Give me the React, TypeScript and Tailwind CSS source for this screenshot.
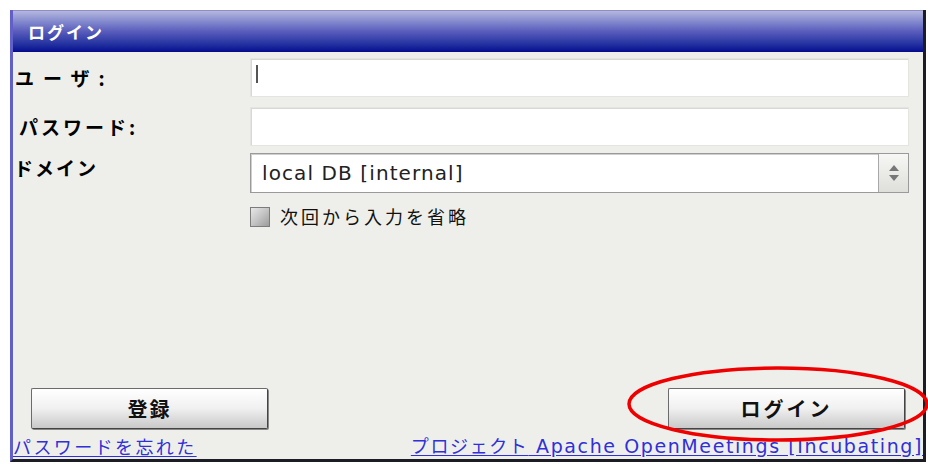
import React from "react";

const jp = { fontFamily: '"Noto Sans CJK JP", "DejaVu Sans", sans-serif' };
const ui = { fontFamily: '"DejaVu Sans", "Noto Sans CJK JP", sans-serif' };

function Label({ children, className = "" }: { children: React.ReactNode; className?: string }) {
  return (
    <div className={`w-[236px] shrink-0 text-[19px] font-bold text-black leading-none ${className}`} style={jp}>
      {children}
    </div>
  );
}

function TextField({ caret = false }: { caret?: boolean }) {
  return (
    <div className="relative h-[39px] flex-1 bg-white border border-[#e4e5e0] shadow-[inset_1px_1px_0_#d8d9d4]">
      {caret && <div className="absolute left-[5px] top-[6px] w-[2px] h-[18px] bg-[#555]" />}
    </div>
  );
}

function Button({ children, className = "" }: { children: React.ReactNode; className?: string }) {
  return (
    <div
      className={`w-[237px] h-[41px] flex items-center justify-center rounded-[2px] border border-[#6b6b6b] border-b-[#444] border-r-[#444] bg-gradient-to-b from-white via-[#f0f0f0] to-[#c9c9c9] shadow-[1px_1px_0_#888] text-[20px] font-bold text-[#111] ${className}`}
      style={jp}
    >
      {children}
    </div>
  );
}

export default function App() {
  return (
    <div className="w-[928px] h-[464px] bg-white pt-[10px] pl-[10px]">
      <div className="w-[916px] h-[452px] flex flex-col bg-[#eeefea] border-l-[3px] border-l-[#6060c8] border-r-[3px] border-r-[#1c1c24] border-b-[3px] border-b-[#1c1c24]">
        {/* title bar */}
        <div className="h-[42px] shrink-0 flex items-center pl-[15px] border-t border-t-[#8c8cc8] bg-gradient-to-b from-[#b4b8de] via-[#5a5cbc] to-[#06068e]">
          <span className="text-white text-[17px] font-bold tracking-[2px]" style={jp}>ログイン</span>
        </div>

        {/* form rows */}
        <div className="flex-1 flex flex-col pt-[6px] pr-[14px] pl-[1px]">
          <div className="flex items-center">
            <Label className="pl-[1px] tracking-[9px]">ユーザ:</Label>
            <TextField caret />
          </div>
          <div className="flex items-center mt-[10px]">
            <Label className="pl-[5px] tracking-[3px]">パスワード:</Label>
            <TextField />
          </div>
          <div className="flex items-start mt-[7px]">
            <Label className="pt-[5px] tracking-[2px]">ドメイン</Label>
            <div className="flex-1 h-[40px] flex bg-white border border-[#9a9a9a] shadow-[inset_1px_1px_0_#cfcfcf]">
              <div className="flex-1 flex items-center pl-[11px] text-[20px] tracking-[1.1px] text-[#222]" style={ui}>
                local DB [internal]
              </div>
              <div className="w-[30px] h-full border-l border-[#a8a8a8] bg-gradient-to-b from-[#f7f7f5] to-[#dededa] flex flex-col items-center justify-center gap-[4px]">
                <svg width="10" height="6" viewBox="0 0 10 6"><path d="M5 0 L10 6 L0 6 Z" fill="#777" /></svg>
                <svg width="10" height="6" viewBox="0 0 10 6"><path d="M0 0 L10 0 L5 6 Z" fill="#777" /></svg>
              </div>
            </div>
          </div>
          <div className="flex items-center mt-[10px] pl-[236px]">
            <div className="w-[20px] h-[20px] border border-[#7c7c7c] bg-gradient-to-br from-[#e8e8e8] via-[#c4c4c4] to-[#9c9c9c]" />
            <span className="ml-[10px] text-[18px] tracking-[3px] text-[#111]" style={jp}>次回から入力を省略</span>
          </div>

          <div className="flex-1" />

          {/* action buttons */}
          <div className="relative flex justify-between pl-[17px] pr-[4px]">
            <Button className="tracking-[2px]">登録</Button>
            <Button className="tracking-[3px]">ログイン</Button>
            <svg className="absolute left-[613px] top-[-22px] overflow-visible" width="302" height="76" viewBox="0 0 302 76">
              <ellipse cx="151" cy="38" rx="149" ry="36" fill="none" stroke="#ee0000" strokeWidth="3.5" />
            </svg>
          </div>
        </div>

        {/* footer links */}
        <div className="h-[30px] shrink-0 flex items-center justify-between pt-[4px] text-[19px] text-[#3030d8]" style={ui}>
          <span className="underline underline-offset-2 text-[18px] tracking-[2.4px]" style={jp}>パスワードを忘れた</span>
          <span className="underline underline-offset-2 tracking-[1.6px]">
            <span style={jp} className="text-[18px]">プロジェクト</span> Apache OpenMeetings [Incubating]
          </span>
        </div>
      </div>
    </div>
  );
}
